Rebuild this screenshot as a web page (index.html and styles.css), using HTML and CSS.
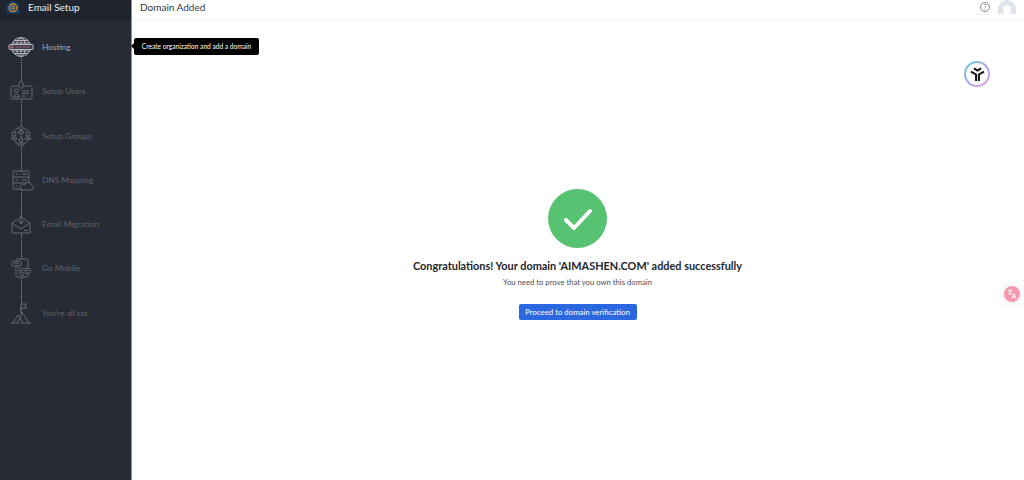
FILE: index.html
```html
<!DOCTYPE html>
<html lang="en">
<head>
    <meta charset="UTF-8">
    <title>Domain Added</title>
    <link rel="stylesheet" href="styles.css">
</head>
<body>
    <aside class="sidebar">
        <div class="sidebar-head">
            <svg class="app-logo" viewBox="0 0 14 14" width="14" height="14">
                <path d="M7 .6 13.200 4.600V13.400H.8V4.600Z" fill="#17406e"/>
                <circle cx="7" cy="7.800" r="3.800" fill="none" stroke="#d98a2c" stroke-width="1.300"/>
                <circle cx="7" cy="7.800" r="1.500" fill="none" stroke="#e0a048" stroke-width="1"/>
            </svg>
            <span class="app-name">Email Setup</span>
        </div>

        <ul class="steps">
            <li class="step step-active">
                <svg class="step-icon" viewBox="0 0 26 26" width="26" height="26">
                    <circle cx="13" cy="13" r="9.500"/>
                    <ellipse cx="13" cy="13" rx="4.500" ry="9.500"/>
                    <path d="M13 3.500v19M6 6.500h14M4.500 9h17M4.500 17h17M6 19.500h14"/>
                    <rect x="1" y="10.500" width="24" height="5" rx="1" fill="#3f434e"/>
                    <rect x="2.500" y="11.500" width="3" height="3" fill="#a85a60" stroke="none"/>
                    <path class="www" d="M8.500 13h13"/>
                </svg>
                <span>Hosting</span>
            </li>
            <li class="step">
                <svg class="step-icon" viewBox="0 0 26 26" width="26" height="26">
                    <rect x="3" y="8" width="21" height="13" rx="1.500"/>
                    <rect x="11" y="4" width="4" height="6" rx="1.200"/>
                    <circle cx="8.500" cy="12.500" r="1.800"/>
                    <path d="M5.500 19c0-4 6-4 6 0ZM14 13h7M14 15.500h7M14 18h4"/>
                </svg>
                <span>Setup Users</span>
            </li>
            <li class="step">
                <svg class="step-icon" viewBox="0 0 26 26" width="26" height="26">
                    <path d="M6 9.500C7 6.500 9 5 10.500 5M20 9.500C19 6.500 17 5 15.500 5M5.500 15.500C6 18 7.500 19.500 10 20.500M20.500 15.500C20 18 18.500 19.500 16 20.500"/>
                    <circle cx="13" cy="5" r="2"/>
                    <path d="M10 10c0-3 6-3 6 0Z"/>
                    <circle cx="6" cy="11" r="2"/>
                    <path d="M3 16c0-3 6-3 6 0Z"/>
                    <circle cx="20" cy="11" r="2"/>
                    <path d="M17 16c0-3 6-3 6 0Z"/>
                    <circle cx="13" cy="17" r="2"/>
                    <path d="M10 22c0-3 6-3 6 0Z"/>
                </svg>
                <span>Setup Groups</span>
            </li>
            <li class="step">
                <svg class="step-icon" viewBox="0 0 26 26" width="26" height="26">
                    <rect x="5" y="4" width="16" height="18" rx="1"/>
                    <path d="M5 10h16M5 16h16M14 7h5M14 13h5M7.500 7h2M7.500 13h2M7.500 19h2"/>
                    <path d="M14 23h9a2.300 2.300 0 0 0 .5-4.500 3.500 3.500 0 0 0-6.700-1 2.800 2.800 0 0 0-2.800 5.500Z"/>
                </svg>
                <span>DNS Mapping</span>
            </li>
            <li class="step">
                <svg class="step-icon" viewBox="0 0 26 26" width="26" height="26">
                    <path d="M4 12 13 6l9 6v10H4Z"/>
                    <path d="M4 12l9 6 9-6M16 19.500h3.500"/>
                    <path d="M13 4v8M10.500 9.500 13 13l2.500-3.500"/>
                </svg>
                <span>Email Migration</span>
            </li>
            <li class="step">
                <svg class="step-icon" viewBox="0 0 26 26" width="26" height="26">
                    <rect x="8" y="4" width="12" height="18" rx="1.500"/>
                    <rect x="3.500" y="6.500" width="10" height="4.500" rx="2"/>
                    <rect x="13.500" y="13.500" width="9" height="4.500" rx="2"/>
                    <path d="M10 13h3M10 15.500h3M10 18h3M6 8.700h5M15.500 15.700h5M12 20h4"/>
                </svg>
                <span>Go Mobile</span>
            </li>
            <li class="step">
                <svg class="step-icon" viewBox="0 0 26 26" width="26" height="26">
                    <path d="M3 23h20M5 23l5-8 2 2.500 2-5 7 10.500"/>
                    <path d="M13 12.500V4M13 4h5.500L17 6l1.500 2H13"/>
                    <path d="M9 23l3-5 3 5"/>
                </svg>
                <span>You're all set</span>
            </li>
        </ul>
    </aside>

    <div class="tooltip">Create organization and add a domain</div>

    <main class="main">
        <header class="topbar">
            <h1>Domain Added</h1>
            <div class="topbar-right">
                <span class="help">?</span>
                <svg class="avatar" viewBox="0 0 18 14" width="18" height="14">
                    <path d="M0 14V9a9 9 0 0 1 18 0v5h-5.500c-.5-1-.5-2 0-3 1-1.500 1-6-3.500-6s-4.500 4.500-3.500 6c.5 1 .5 2 0 3Z" fill="#dfe3ec"/>
                </svg>
            </div>
        </header>

        <section class="success">
            <div class="check-circle">
                <svg viewBox="0 0 30 24" width="30" height="24">
                    <path d="M3 13l8 8L27 4" fill="none" stroke="#fff" stroke-width="4" stroke-linecap="round" stroke-linejoin="round"/>
                </svg>
            </div>
            <h2>Congratulations! Your domain 'AIMASHEN.COM' added successfully</h2>
            <p>You need to prove that you own this domain</p>
            <button type="button">Proceed to domain verification</button>
        </section>
    </main>

    <!-- floating browser extension buttons -->
    <div class="float-logo">
        <svg viewBox="0 0 16 16" width="19" height="19">
            <path d="M2.500 5.500 6.800 8V13.500M13.500 5.500 9.200 8V13.500M5 2.800 8 4.700 11 2.800" fill="none" stroke="#111" stroke-width="1.700"/>
        </svg>
    </div>
    <div class="float-translate">
        <svg viewBox="0 0 12 12" width="12" height="12">
            <path d="M2 2.500h4M4 1.500v1M5.500 2.500C5 5 3.500 6 2 6.500M3 3.500c.5 1.500 1.500 2.500 3 3M6 10.500 8 5.500l2 5M6.800 9h2.400" fill="none" stroke="#fff" stroke-width="1"/>
        </svg>
    </div>
</body>
</html>
```

FILE: styles.css
```css
* {
    box-sizing: border-box;
}

body {
    display: flex;
    height: 480px;
    margin: 0;
    overflow: hidden;
    background-color: #ffffff;
    font-family: Lato, "Liberation Sans", sans-serif;
}

/* Left dark column */
.sidebar {
    flex: 0 0 132px;
    background-color: #272b36;
    border-right: 1px solid #8d9096;
}

.sidebar-head {
    display: flex;
    align-items: center;
    gap: 8px;
    height: 20px;
    padding: 0 0 6px 6px;
    background-color: #20242e;
}

.app-name {
    color: #f2f3f5;
    font-size: 10px;
    font-weight: 400;
}

.steps {
    position: relative;
    margin: 0;
    padding: 5px 0 0;
    list-style: none;
}

/* Dotted line that joins the step icons */
.steps::before {
    content: "";
    position: absolute;
    left: 20.5px;
    top: 30px;
    height: 265px;
    border-left: 1.5px dotted #8f9198;
}

.step {
    position: relative;
    display: flex;
    align-items: center;
    gap: 8px;
    height: 44.25px;
    padding-left: 8px;
    color: #5f636d;
    font-size: 8.3px;
}

.step-icon {
    fill: #272b36;
    stroke: #6f727b;
    stroke-width: 0.9;
}

.step-active {
    color: #a9abb1;
}

.step-active .step-icon {
    stroke: #c4c6ca;
}

.step-active .www {
    stroke: #b5666b;
    stroke-dasharray: 2 1;
    stroke-width: 1.2;
}

.tooltip {
    position: absolute;
    left: 134px;
    top: 38px;
    width: 125px;
    height: 17px;
    border-radius: 2px;
    background-color: #000000;
    color: #ffffff;
    font-size: 6.6px;
    line-height: 17px;
    text-align: center;
}

.tooltip::before {
    content: "";
    position: absolute;
    left: -3px;
    top: 5px;
    border-top: 3.5px solid transparent;
    border-bottom: 3.5px solid transparent;
    border-right: 3px solid #000000;
}

.main {
    flex: 1;
}

.topbar {
    display: flex;
    align-items: center;
    justify-content: space-between;
    height: 21px;
    padding: 0 8px 6px;
    border-bottom: 1px solid #f4f4f5;
}

.topbar h1 {
    margin: 0;
    color: #333842;
    font-size: 10px;
    font-weight: 400;
}

.topbar-right {
    display: flex;
    align-items: flex-start;
    gap: 8px;
    height: 14px;
}

.help {
    width: 10px;
    height: 10px;
    margin-top: 2px;
    border: 1px solid #8a8d93;
    border-radius: 50%;
    color: #6f7278;
    font-size: 7px;
    line-height: 8px;
    text-align: center;
}

/* Success message in the middle of the page */
.success {
    display: flex;
    flex-direction: column;
    align-items: center;
    padding: 168px 1px 0 0;
}

.check-circle {
    display: flex;
    align-items: center;
    justify-content: center;
    width: 59px;
    height: 59px;
    border-radius: 50%;
    background-color: #57c271;
}

.success h2 {
    margin: 10px 0 0;
    color: #23262d;
    font-size: 10.9px;
    font-weight: 700;
    line-height: 16px;
}

.success p {
    margin: 3px 0 0;
    color: #4a4d55;
    font-size: 7.7px;
    line-height: 10px;
}

.success button {
    width: 118px;
    height: 16px;
    margin-top: 17px;
    padding: 0;
    border: none;
    border-radius: 2px;
    background-color: #2b68e0;
    color: #ffffff;
    font-family: inherit;
    font-size: 7.8px;
}

.float-logo {
    position: absolute;
    left: 964px;
    top: 61px;
    display: flex;
    align-items: center;
    justify-content: center;
    width: 26px;
    height: 26px;
    border: 2px solid transparent;
    border-radius: 50%;
    background: linear-gradient(#fff, #fff) padding-box,
        linear-gradient(135deg, #5fd0e8, #a9a5f0 55%, #f5a5d5) border-box;
}

.float-translate {
    position: absolute;
    left: 1004px;
    top: 286px;
    display: flex;
    align-items: center;
    justify-content: center;
    width: 16px;
    height: 16px;
    border-radius: 50%;
    background-color: #f797ad;
    box-shadow: 0 0 6px 3px rgba(240, 240, 240, 0.8);
}
```
